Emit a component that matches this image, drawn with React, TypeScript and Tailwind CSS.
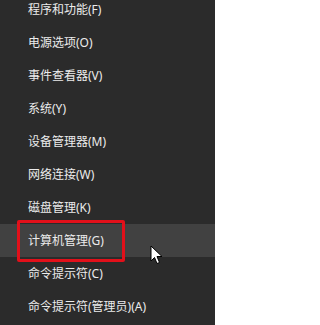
import React from "react";

const items = [
  "程序和功能(F)",
  "电源选项(O)",
  "事件查看器(V)",
  "系统(Y)",
  "设备管理器(M)",
  "网络连接(W)",
  "磁盘管理(K)",
  "计算机管理(G)",
  "命令提示符(C)",
  "命令提示符(管理员)(A)",
];

export default function App() {
  return (
    <div className="relative w-[215px] h-[325px] overflow-hidden bg-[#2b2b2b] font-['Noto_Sans','Noto_Sans_CJK_SC',sans-serif] text-[12px] text-[#ececec]">
      <div className="flex flex-col mt-[-7px]">
        {items.map((t, i) => (
          <div
            key={t}
            className={
              i === 7
                ? "h-[33px] flex items-center pl-[28px] bg-[#414141] shrink-0"
                : "h-[33px] flex items-center pl-[28px] shrink-0"
            }
          >
            <span className="leading-none">{t}</span>
          </div>
        ))}
      </div>
      <div className="absolute left-[17px] top-[220px] w-[108px] h-[42px] border-[3px] border-[#e2101a] rounded-[2px]" />
      <svg
        className="absolute left-[150px] top-[245px]"
        width="13"
        height="20"
        viewBox="0 0 13 20"
      >
        <path
          d="M1 1 L1 16 L4.5 12.5 L7 18.5 L9.5 17.5 L7 11.5 L12 11.5 Z"
          fill="#ffffff"
          stroke="#000000"
          strokeWidth="1"
          strokeLinejoin="miter"
        />
      </svg>
    </div>
  );
}
